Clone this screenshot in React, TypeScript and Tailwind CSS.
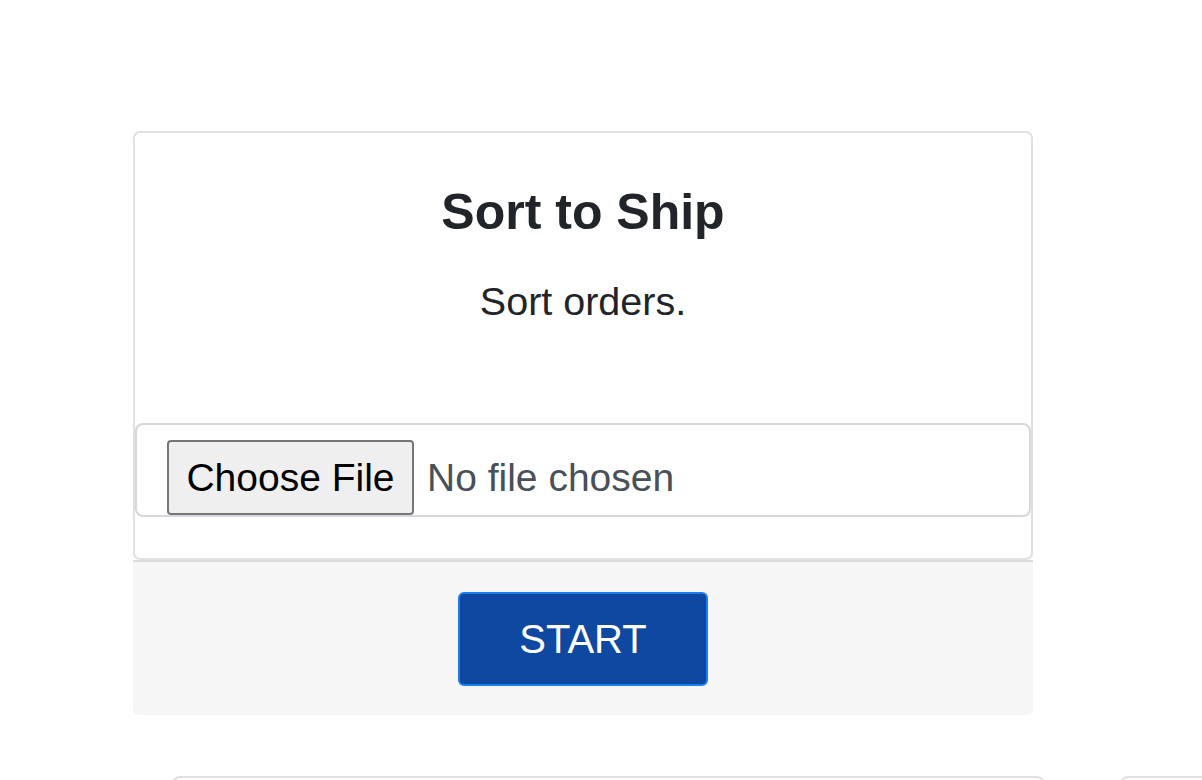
export default function App() {
  return (
    <div className="h-[780px] w-[1202px] overflow-hidden bg-white font-['Liberation_Sans',Arial,sans-serif] text-[#212529]">
      <div className="ml-[133px] mt-[131px] w-[900px]">
        <div className="flex h-[429px] flex-col rounded-[7px] border-2 border-[#e0e0e0] bg-white">
          <h3 className="pt-[50px] text-center text-[50px] font-bold leading-[59px]">Sort to Ship</h3>
          <p className="mt-[30px] text-center text-[39.5px] leading-[58px]">Sort orders.</p>
          <div className="mt-[93px] flex h-[94px] items-start rounded-[8px] border-2 border-[#d5d8dc] pl-[30px] pt-[15px]">
            <button className="flex h-[75px] w-[247px] items-center justify-center rounded-[4px] border-2 border-[#767676] bg-[#efefef] text-[39px] leading-none text-black">
              Choose File
            </button>
            <span className="ml-[13px] flex h-[75px] items-center text-[39px] leading-none text-[#495057]">
              No file chosen
            </span>
          </div>
        </div>
        <div className="flex h-[155px] items-center justify-center rounded-b-[6px] border-t-2 border-[#dcdcdc] bg-[#f6f6f6]">
          <button className="flex h-[94px] w-[250px] items-center justify-center rounded-[6px] border-2 border-[#1a7fea] bg-[#0e48a1] text-[40px] leading-none text-white">
            START
          </button>
        </div>
      </div>
      <div className="ml-[172px] mt-[61px] flex gap-[75px]">
        <div className="h-[60px] w-[873px] shrink-0 rounded-t-[8px] border-2 border-[#e0e0e0]" />
        <div className="h-[60px] w-[873px] shrink-0 rounded-t-[8px] border-2 border-[#e0e0e0]" />
      </div>
    </div>
  );
}
